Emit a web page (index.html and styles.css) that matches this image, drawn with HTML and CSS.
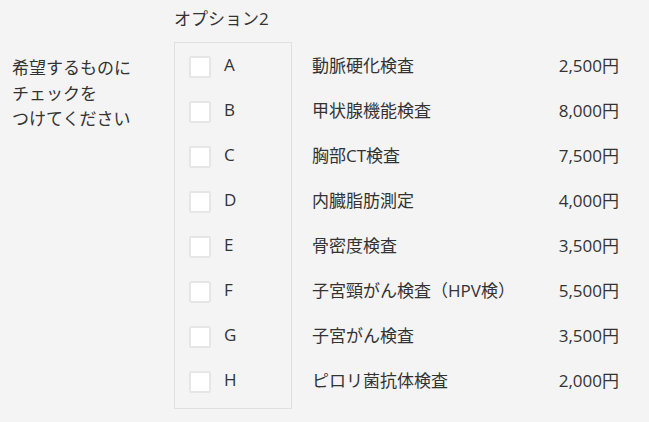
FILE: index.html
```html
<!DOCTYPE html>
<html lang="ja">
<head>
<meta charset="utf-8">
<link rel="stylesheet" href="styles.css">
</head>
<body>
<div class="form">
  <div class="legend">オプション2</div>
  <div class="label">希望するものに<br>チェックを<br>つけてください</div>
  <div class="box">
    <div class="opt"><span class="check"></span><span class="letter">A</span></div>
    <div class="opt"><span class="check"></span><span class="letter">B</span></div>
    <div class="opt"><span class="check"></span><span class="letter">C</span></div>
    <div class="opt"><span class="check"></span><span class="letter">D</span></div>
    <div class="opt"><span class="check"></span><span class="letter">E</span></div>
    <div class="opt"><span class="check"></span><span class="letter">F</span></div>
    <div class="opt"><span class="check"></span><span class="letter">G</span></div>
    <div class="opt"><span class="check"></span><span class="letter">H</span></div>
  </div>
  <div class="list">
    <div class="item"><span class="name">動脈硬化検査</span><span class="price">2,500円</span></div>
    <div class="item"><span class="name">甲状腺機能検査</span><span class="price">8,000円</span></div>
    <div class="item"><span class="name">胸部CT検査</span><span class="price">7,500円</span></div>
    <div class="item"><span class="name">内臓脂肪測定</span><span class="price">4,000円</span></div>
    <div class="item"><span class="name">骨密度検査</span><span class="price">3,500円</span></div>
    <div class="item"><span class="name">子宮頸がん検査（HPV検）</span><span class="price">5,500円</span></div>
    <div class="item"><span class="name">子宮がん検査</span><span class="price">3,500円</span></div>
    <div class="item"><span class="name">ピロリ菌抗体検査</span><span class="price">2,000円</span></div>
  </div>
</div>
</body>
</html>
```
FILE: styles.css
```css
html, body {
  margin: 0;
  padding: 0;
  background: #f4f4f4;
}
body {
  font-family: "Open Sans", "Noto Sans CJK JP", sans-serif;
  font-size: 17px;
  color: #333;
}
.form {
  display: grid;
  grid-template-columns: 174px 118px 1fr;
  grid-template-rows: auto auto;
  padding-top: 7px;
}
.legend {
  grid-column: 2;
  grid-row: 1;
  line-height: 24px;
  height: 24px;
  margin-bottom: 11px;
}
.label {
  grid-column: 1;
  grid-row: 2;
  padding: 13px 0 0 12px;
  line-height: 25.5px;
}
.box {
  grid-column: 2;
  grid-row: 2;
  border: 1px solid #e0e0e0;
  padding: 1px 0 4px;
  display: flex;
  flex-direction: column;
}
.opt {
  height: 45px;
  display: flex;
  align-items: center;
  padding-left: 14px;
}
.check {
  width: 22px;
  height: 22px;
  box-sizing: border-box;
  border: 2px solid #e6e6e6;
  border-radius: 2px;
  background: #fff;
}
.letter {
  margin-left: 13px;
  padding-bottom: 4px;
}
.list {
  grid-column: 3;
  grid-row: 2;
  padding: 2px 30px 0 20px;
  display: flex;
  flex-direction: column;
}
.item {
  height: 45px;
  display: flex;
  align-items: center;
  justify-content: space-between;
}
.name, .price {
  padding-bottom: 4px;
}
```
